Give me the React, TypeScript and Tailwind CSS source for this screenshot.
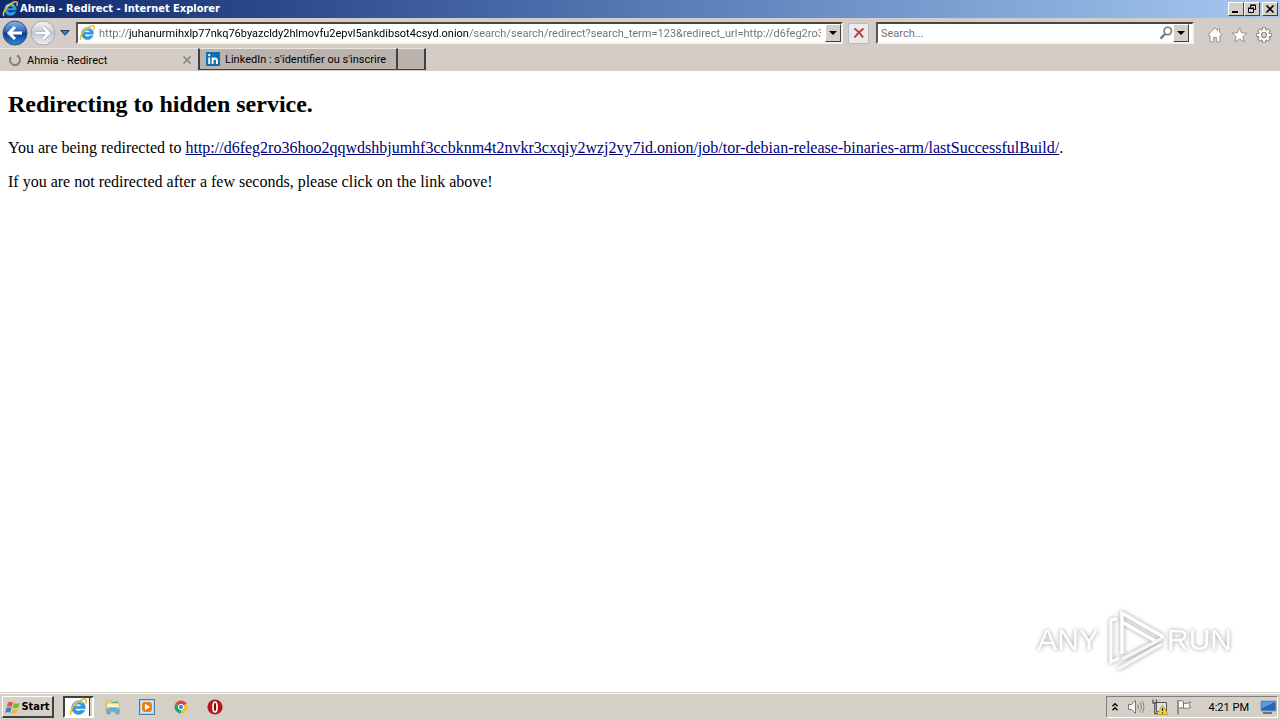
import type { ReactNode } from "react";

const raised =
  "border border-t-white border-l-white border-r-[#404040] border-b-[#404040] bg-[#d4d0c8]";
const sunken =
  "border-2 border-t-[#4a4540] border-l-[#5a5550] border-r-[#f4f2ee] border-b-[#f4f2ee] bg-white";

function IeLogo({ className }: { className: string }) {
  return (
    <svg viewBox="0 0 18 18" className={className} aria-hidden="true">
      <path
        d="M15.800 12.200a6.800 6.800 0 1 1 .5-2.800v1H6.200c.2 2.600 4.300 3.500 5.700 1.800zM6.300 8.200h5.900c-.2-3-5.500-3-5.900 0z"
        fill="#2f9be0"
        stroke="#1f7fc8"
        strokeWidth=".5"
      />
      <path d="M4 7.500a5.800 5.800 0 0 1 9.500-2.200" fill="none" stroke="#8fd6f8" strokeWidth="1.200" />
      <path
        d="M2.400 16.800C.4 15.400 2 10.600 6 6.500 10.300 2.100 15.200-.1 16.800 1.400c.8.800.6 2.400-.4 4.200"
        fill="none"
        stroke="#f3bd27"
        strokeWidth="1.700"
      />
    </svg>
  );
}

function DropArrow() {
  return (
    <svg viewBox="0 0 8 4" className="h-1 w-2" aria-hidden="true">
      <path d="M0 0h8L4 4z" fill="#000" />
    </svg>
  );
}

function WindowButton({ label, children }: { label: string; children: ReactNode }) {
  return (
    <button aria-label={label} className={`${raised} flex h-3.5 w-4 items-center justify-center`}>
      <svg viewBox="0 0 12 10" className="h-2.5 w-3 shrink-0" fill="none" stroke="#000" aria-hidden="true">
        {children}
      </svg>
    </button>
  );
}

function TitleBar() {
  return (
    <header className="flex h-[18px] items-center bg-linear-to-r from-[#10286c] via-[#5678b4] to-[#a6caf0] pr-0.5 pl-0.5">
      <IeLogo className="size-4" />
      <h1 className="ml-0.5 flex-1 font-[Tahoma,'DejaVu_Sans_Condensed','DejaVu_Sans',sans-serif] text-[11px] leading-4 font-bold text-white">
        Ahmia - Redirect - Internet Explorer
      </h1>
      <WindowButton label="Minimize">
        <path d="M2 8h6" strokeWidth="2" />
      </WindowButton>
      <WindowButton label="Restore">
        <path d="M4.500 3.500v-2h5v4h-2M4 1h6" />
        <path d="M2.500 4.500h5v4h-5zM2 4h6" />
      </WindowButton>
      <span className="w-0.5" />
      <WindowButton label="Close">
        <path d="M2.500 1.500l7 7m0-7l-7 7" strokeWidth="1.600" />
      </WindowButton>
    </header>
  );
}

function NavButtons() {
  return (
    <nav aria-label="History" className="flex items-center">
      <button aria-label="Back">
        <svg viewBox="0 0 26 26" className="size-[26px]" aria-hidden="true">
          <defs>
            <linearGradient id="back" x1="0" y1="0" x2="0" y2="1">
              <stop offset="0" stopColor="#8fb6e6" />
              <stop offset=".45" stopColor="#2c62b4" />
              <stop offset=".5" stopColor="#0c3a8e" />
              <stop offset="1" stopColor="#2b8fe0" />
            </linearGradient>
          </defs>
          <circle cx="13" cy="13" r="12" fill="url(#back)" stroke="#31527f" />
          <path d="M20 13H7.500m5.500-6l-6 6 6 6" fill="none" stroke="#fff" strokeWidth="3" />
        </svg>
      </button>
      <button aria-label="Forward" className="ml-0.5">
        <svg viewBox="0 0 26 26" className="size-[26px]" aria-hidden="true">
          <defs>
            <linearGradient id="forward" x1="0" y1="0" x2="0" y2="1">
              <stop offset="0" stopColor="#f5f6f8" />
              <stop offset=".5" stopColor="#c3c8d0" />
              <stop offset="1" stopColor="#eceff3" />
            </linearGradient>
          </defs>
          <circle cx="13" cy="13" r="12" fill="url(#forward)" stroke="#a3a7ae" />
          <path d="M6 13h12.500M13 7l6 6-6 6" fill="none" stroke="#9fa5ae" strokeWidth="4" />
          <path d="M6 13h12.500M13 7l6 6-6 6" fill="none" stroke="#fff" strokeWidth="2.600" />
        </svg>
      </button>
      <button aria-label="Recent pages" className="flex w-[18px] justify-center">
        <svg viewBox="0 0 10 6" className="h-1.5 w-2.5" aria-hidden="true">
          <path d="M.7.5h8.600L5 5.300z" fill="#2f7cc4" stroke="#17406e" />
        </svg>
      </button>
    </nav>
  );
}

function AddressRow() {
  return (
    <div className="flex h-[30px] items-center pr-2 pl-0.5">
      <NavButtons />
      <div className={`${sunken} ml-0.5 flex h-[22px] min-w-0 flex-2 items-center pl-px`}>
        <IeLogo className="size-4 shrink-0" />
        <input
          aria-label="Address"
          defaultValue="http://juhanurmihxlp77nkq76byazcldy2hlmovfu2epvl5ankdibsot4csyd.onion/search/search/redirect?search_term=123&redirect_url=http://d6feg2ro36hoo2qqwdshbjumhf3ccbknm4t2nvkr3cxqiy2wzj2vy7id.onion/"
          className="mr-1 ml-1 min-w-0 flex-1 bg-[linear-gradient(90deg,#707070_29px,#000_29px,#000_370px,#707070_370px)] bg-clip-text pt-0.5 text-[11px] leading-4 text-transparent outline-none"
        />
        <button aria-label="Show address history" className={`${raised} flex h-[18px] w-4 items-center justify-center`}>
          <DropArrow />
        </button>
      </div>
      <button
        aria-label="Stop"
        className="mx-[5px] flex size-[21px] items-center justify-center rounded-xs border border-[#b9b9c4] bg-[#ece9ea]"
      >
        <svg viewBox="0 0 12 12" className="size-3" aria-hidden="true">
          <path d="M1.500 1.500c3 2 6 5 8.500 9M10.500 1.500C7 4 4 7 1.500 10.500" fill="none" stroke="#c03c40" strokeWidth="2" />
        </svg>
      </button>
      <form className={`${sunken} ml-0.5 flex h-[22px] w-[318px] min-w-0 shrink-0 items-center`}>
        <input
          aria-label="Search"
          placeholder="Search..."
          className="ml-[3px] min-w-0 flex-1 pt-0.5 text-[11px] leading-4 outline-none placeholder:text-[#77736e]"
        />
        <button type="button" aria-label="Run search">
          <svg viewBox="0 0 14 14" className="size-3.5" fill="none" stroke="#77777a" aria-hidden="true">
            <circle cx="8.800" cy="5" r="3.700" strokeWidth="1.600" />
            <path d="M6 8l-4.500 4.700" strokeWidth="2.400" />
          </svg>
        </button>
        <button type="button" aria-label="Search options" className={`${raised} mr-[3px] flex h-[18px] w-4 items-center justify-center`}>
          <DropArrow />
        </button>
      </form>
      <div className="ml-[13px] flex items-center gap-2 pt-1">
        <button aria-label="Home">
          <svg viewBox="0 0 16 16" className="size-4" aria-hidden="true">
            <path
              d="M8 .8L.8 8l1.400 1.200L3 8.500V15h3.600v-4.500h2.800V15H13V8.500l.8.700L15.200 8 12.600 5.300V1.800h-2v1.600z"
              fill="#fdfdfd"
              stroke="#8b8b90"
              strokeWidth=".9"
            />
          </svg>
        </button>
        <button aria-label="Favorites">
          <svg viewBox="0 0 17 16" className="h-4 w-[17px]" aria-hidden="true">
            <path
              d="M8.500.8l2.100 4.900 5.400.4-4.100 3.500 1.300 5.400-4.700-3-4.700 3 1.300-5.400L1 6.100l5.400-.4z"
              fill="#fdfdfd"
              stroke="#8b8b90"
              strokeWidth=".9"
            />
          </svg>
        </button>
        <button aria-label="Tools">
          <svg viewBox="0 0 16 16" className="size-4" fill="none" aria-hidden="true">
            <g stroke="#85858a" strokeWidth="4">
              <path d="M8 .2v15.600M.2 8h15.600M2.500 2.500l11 11M13.500 2.500l-11 11" />
            </g>
            <circle cx="8" cy="8" r="6" fill="#85858a" />
            <g stroke="#fdfdfd" strokeWidth="2.200">
              <path d="M8 1v14M1 8h14M3.100 3.100l9.800 9.800M12.900 3.100l-9.800 9.800" />
            </g>
            <circle cx="8" cy="8" r="5.200" fill="#fdfdfd" />
            <circle cx="8" cy="8" r="2.700" fill="#d4d0c8" stroke="#85858a" />
          </svg>
        </button>
      </div>
    </div>
  );
}

function TabRow() {
  return (
    <div role="tablist" className="flex h-[23px] items-start">
      <div className="flex h-[23px] w-[198px] items-center border-t border-[#e9e6e1] pr-1.5 pl-2">
        <svg viewBox="0 0 14 14" className="size-3.5" fill="none" aria-hidden="true">
          <path d="M9 2.500A5 5 0 1 1 3 4" stroke="#85817c" strokeWidth="2" />
        </svg>
        <button role="tab" aria-selected="true" className="ml-[5px] flex-1 pt-0.5 text-left text-[11px] leading-4">
          Ahmia - Redirect
        </button>
        <button aria-label="Close tab">
          <svg viewBox="0 0 10 10" className="size-2.5" aria-hidden="true">
            <path d="M1.500 1.500l7 7m0-7l-7 7" stroke="#85817c" strokeWidth="1.700" />
          </svg>
        </button>
      </div>
      <button
        role="tab"
        aria-selected="false"
        className="flex h-[22px] w-[200px] items-center border-t border-r-2 border-b border-l-2 border-t-[#e9e6e1] border-r-[#404040] border-b-[#404040] border-l-[#404040] bg-[#bab3ae] pl-1.5 text-left text-[11px] leading-4 whitespace-nowrap"
      >
        <svg viewBox="0 0 14 14" className="mr-[5px] size-3.5" aria-hidden="true">
          <rect width="14" height="14" rx="1" fill="#0a72b0" />
          <path d="M3.200 5.500V12M6.600 12V5.500M6.600 9c0-3.200 4.300-3.400 4.300-.2V12" fill="none" stroke="#fff" strokeWidth="1.900" />
          <circle cx="3.200" cy="3.100" r="1.200" fill="#fff" />
        </svg>
        <span className="pt-0.5">LinkedIn : s'identifier ou s'inscrire</span>
      </button>
      <button
        aria-label="New tab"
        className="h-[22px] w-7 border-t border-r-2 border-b border-t-[#e9e6e1] border-r-[#404040] border-b-[#404040] bg-[#bab3ae]"
      />
    </div>
  );
}

function Watermark() {
  return (
    <div
      aria-label="ANY RUN"
      className="flex items-center self-end font-['Liberation_Sans',sans-serif] text-3xl leading-10 text-white drop-shadow-[0_0_2px_#999999]"
    >
      <span>ANY</span>
      <svg viewBox="0 0 64 64" className="mx-0.5 size-16" fill="none" stroke="#fff" aria-hidden="true">
        <path d="M16 11l-6 1v42l8-4" strokeWidth="3" />
        <path d="M21 46V5l40 23v3M21 14l35 20" strokeWidth="3.500" />
        <path d="M21 51l39-20M17 61l44-25" stroke="#f6f6f6" strokeWidth="3.500" />
      </svg>
      <span>RUN</span>
    </div>
  );
}

function Page() {
  return (
    <main className="flex flex-1 flex-col bg-white px-2 pt-5 pb-5 font-['Liberation_Serif',serif] text-base leading-[18px] text-black">
      <h2 className="text-2xl leading-[26px] font-bold">Redirecting to hidden service.</h2>
      <p className="mt-[22px]">
        You are being redirected to{" "}
        <a
          href="http://d6feg2ro36hoo2qqwdshbjumhf3ccbknm4t2nvkr3cxqiy2wzj2vy7id.onion/job/tor-debian-release-binaries-arm/lastSuccessfulBuild/"
          className="text-[#00007a] underline"
        >
          http://d6feg2ro36hoo2qqwdshbjumhf3ccbknm4t2nvkr3cxqiy2wzj2vy7id.onion/job/tor-debian-release-binaries-arm/lastSuccessfulBuild/
        </a>
        .
      </p>
      <p className="mt-4">If you are not redirected after a few seconds, please click on the link above!</p>
      <div className="mt-auto mr-10 flex flex-col">
        <Watermark />
      </div>
    </main>
  );
}

function Taskbar() {
  return (
    <footer className="flex h-7 items-center bg-[#d4d0c8] px-0.5 pt-0.5 shadow-[inset_0_1px_0_#d4d0c8,inset_0_2px_0_#ffffff]">
      <button className={`${raised} flex h-[22px] w-[52px] items-center justify-center border-r-2 border-b-2 pt-0.5 font-[Tahoma,'DejaVu_Sans_Condensed','DejaVu_Sans',sans-serif] text-[11px] font-bold`}>
        <svg viewBox="0 0 16 16" className="size-4 shrink-0" aria-hidden="true">
          <path d="M3 2.500c2-1.200 3.500-1 5 0L6.800 7C5.300 6 3.800 6 1.800 7z" fill="#e8562a" />
          <path d="M9 3c1.600 1 3.500 1 5.600 0l-1.300 4.500c-2 1-4 1-5.500 0z" fill="#74b83c" />
          <path d="M1.500 8c2-1 3.500-1 5 0l-1.300 4.700c-1.500-1-3-1-5 0z" fill="#3583cf" />
          <path d="M7.500 8.500c1.600 1 3.500 1 5.500 0l-1.300 4.600c-2 1-4 1-5.500 0z" fill="#f4b826" />
        </svg>
        Start
      </button>
      <div className="ml-[9px] flex items-center">
        <button aria-label="Internet Explorer" className="flex h-[22px] w-[31px] items-center border-2 border-t-[#404040] border-r-white border-b-white border-l-[#404040] bg-white pl-1">
          <IeLogo className="size-[18px] shrink-0" />
          <span className="ml-0.5 h-full w-[3px] shrink-0 border-l border-[#404040] bg-[#d4d0c8]" />
        </button>
        <button aria-label="Windows Explorer" className="ml-2.5">
          <svg viewBox="0 0 18 18" className="size-[18px]" aria-hidden="true">
            <path d="M2 3h5l1.500 1.500H15V14H2z" fill="#edd37c" stroke="#c8a959" strokeWidth=".7" />
            <path d="M3.500 6h11v3h-11z" fill="#fff4bd" />
            <path d="M8 4l6-1v2H8z" fill="#65b96a" />
            <path d="M3 16v-4.500c0-2 12-2 12 0V16h-3v-3H6v3z" fill="#65b8df" stroke="#3f8cb8" strokeWidth=".6" />
          </svg>
        </button>
        <button aria-label="Media Player" className="ml-4">
          <svg viewBox="0 0 18 18" className="size-[18px]" aria-hidden="true">
            <rect x="1.500" y="1.500" width="15" height="15" fill="#a9d0eb" stroke="#477fae" />
            <rect x="3" y="3" width="12" height="12" fill="#d7e9f4" />
            <rect x="4" y="4" width="10" height="10" rx="3" fill="#f07d14" />
            <path d="M7 5.700l5 3.300-5 3.300z" fill="#fff" />
          </svg>
        </button>
        <button aria-label="Chrome" className="ml-4">
          <svg viewBox="0 0 18 18" className="size-[18px]" aria-hidden="true">
            <path d="M9 9L3.400 5.800A6.500 6.500 0 0 1 14.600 5.800z" fill="#db4437" />
            <path d="M9 9l5.600-3.200A6.500 6.500 0 0 1 9 15.500z" fill="#f4c430" />
            <path d="M9 9v6.500A6.500 6.500 0 0 1 3.400 5.800z" fill="#2f9e57" />
            <circle cx="9" cy="9" r="2.700" fill="#4285f4" stroke="#fff" />
          </svg>
        </button>
        <button aria-label="Opera" className="ml-4">
          <svg viewBox="0 0 18 18" className="size-[18px]" aria-hidden="true">
            <circle cx="9" cy="9" r="7.600" fill="#b3161c" />
            <ellipse cx="9" cy="9" rx="2" ry="5" fill="#7a0c10" stroke="#fff" strokeWidth="1.700" />
          </svg>
        </button>
      </div>
      <div className="ml-auto flex h-[22px] w-[172px] items-center border border-t-[#808080] border-r-white border-b-white border-l-[#808080] pl-1">
        <button aria-label="Show hidden icons">
          <svg viewBox="0 0 8 10" className="h-2.5 w-2" fill="none" stroke="#000" strokeWidth="1.300" aria-hidden="true">
            <path d="M1.500 4.200L4 1.700l2.500 2.500M1.500 8.200L4 5.700l2.500 2.500" />
          </svg>
        </button>
        <svg viewBox="0 0 18 18" className="ml-2 size-[18px]" fill="none" stroke="#77777a" aria-hidden="true">
          <path d="M1.500 6.500h3l4-4v13l-4-4h-3z" fill="#f7f7f7" />
          <path d="M10.500 6.500c1 1.500 1 3.500 0 5M12.800 4.500c2 2.500 2 6.500 0 9M15 3c2.500 3.500 2.500 8.500 0 12" strokeWidth=".9" />
        </svg>
        <svg viewBox="0 0 18 18" className="ml-1.5 size-[18px]" fill="none" aria-hidden="true">
          <path d="M5.500 4.500h10v9h-10z" fill="#e2e2e2" stroke="#55555a" />
          <path d="M2 1.500v3.500h3.500V1.500M3.700 5v10.500h8" stroke="#55555a" strokeWidth="1.300" />
          <path d="M11.500 7L17 16.500H6z" fill="#f7d324" stroke="#b38d15" strokeWidth=".6" />
          <path d="M11.500 10v3M11.500 14.200v1.300" stroke="#222" strokeWidth="1.200" />
        </svg>
        <svg viewBox="0 0 18 18" className="ml-1.5 size-[18px]" fill="none" stroke="#737378" aria-hidden="true">
          <path d="M3.500 3c2.500-1 3.500 0 5 .5v7c-2-1-3-1-5 0M8.500 5c2 1 3.500.5 7-1-1.500 2-1.500 3 0 5.500-3 1-5 1-7 .5" fill="#fbfbfb" />
          <path d="M3 2v14.500" strokeWidth="1.400" />
        </svg>
        <time className="ml-auto pt-0.5 text-[11px] leading-4 whitespace-nowrap">4:21 PM</time>
        <button aria-label="Show desktop" className="ml-2.5">
          <svg viewBox="0 0 18 16" className="h-4 w-[18px]" aria-hidden="true">
            <path d="M2 2h15v10H2z" fill="#2866b5" stroke="#7f9fc4" />
            <path d="M3 3h13L3 9z" fill="#5b9bdf" />
            <path d="M4 14h9" stroke="#44546a" strokeWidth="1.500" />
          </svg>
        </button>
      </div>
    </footer>
  );
}

export default function App() {
  return (
    <div className="flex min-h-screen flex-col bg-[#d4d0c8] font-[Tahoma,Roboto,sans-serif] text-black">
      <TitleBar />
      <div className="bg-[#d4cdc7]">
        <AddressRow />
        <TabRow />
      </div>
      <Page />
      <Taskbar />
    </div>
  );
}
